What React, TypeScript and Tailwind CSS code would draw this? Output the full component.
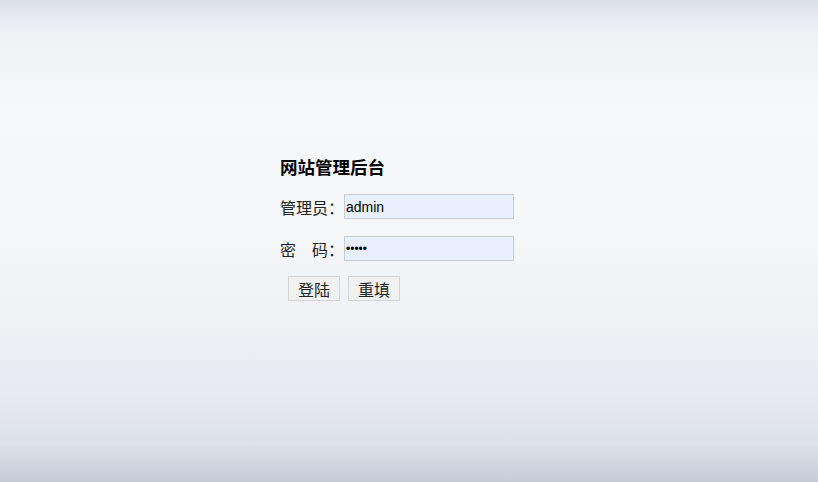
export default function App() {
  return (
    <div className="h-screen w-full bg-[linear-gradient(to_bottom,#dce1e9_0%,#eff1f5_7%,#f7f8fa_22%,#f5f6f8_50%,#eef0f4_68%,#e6e9f0_82%,#dde1e9_92%,#c4ccd8_100%)] font-['Liberation_Sans','Noto_Sans_CJK_SC',sans-serif] text-[#222]">
      <div className="mx-auto w-[258px] pt-[155px]">
        <h1 className="text-[17.5px] font-bold leading-[24px] text-black font-['Noto_Sans_CJK_SC',sans-serif]">
          网站管理后台
        </h1>
        <div className="mt-[15px] flex items-center">
          <span className="w-[64px] text-[16px] font-['Noto_Sans_CJK_SC',sans-serif]">管理员：</span>
          <input
            readOnly
            defaultValue="admin"
            className="h-[25px] w-[170px] border border-[#c9ccd1] bg-[#e8f0fe] px-[1px] text-[14px] text-black outline-none font-['Liberation_Sans',sans-serif]"
          />
        </div>
        <div className="mt-[17px] flex items-center">
          <span className="w-[64px] text-[16px] font-['Noto_Sans_CJK_SC',sans-serif]">密　码：</span>
          <input
            readOnly
            type="password"
            defaultValue="12345"
            className="h-[25px] w-[170px] border border-[#c9ccd1] bg-[#e8f0fe] px-[1px] text-[12px] text-black outline-none"
          />
        </div>
        <div className="mt-[15px] ml-[8px] flex gap-[8px]">
          <button className="h-[25px] w-[52px] border border-[#d4d4d4] bg-[#f1f1f1] text-[16px] leading-none text-[#222] font-['Noto_Sans_CJK_SC',sans-serif]">
            登陆
          </button>
          <button className="h-[25px] w-[52px] border border-[#d4d4d4] bg-[#f1f1f1] text-[16px] leading-none text-[#222] font-['Noto_Sans_CJK_SC',sans-serif]">
            重填
          </button>
        </div>
      </div>
    </div>
  );
}
